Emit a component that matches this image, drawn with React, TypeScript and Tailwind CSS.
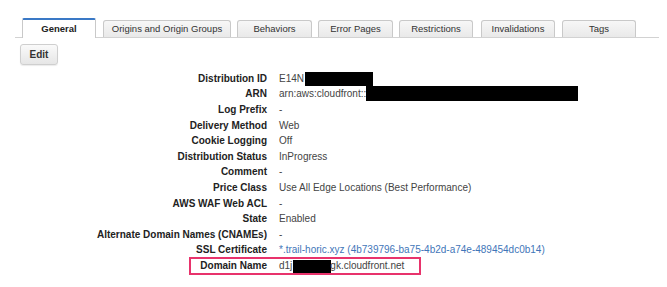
import React from "react";

const tabs: { label: string; w: number; ml: number; active?: boolean }[] = [
  { label: "General", w: 74, ml: 7, active: true },
  { label: "Origins and Origin Groups", w: 128, ml: 7 },
  { label: "Behaviors", w: 75, ml: 6 },
  { label: "Error Pages", w: 75, ml: 6 },
  { label: "Restrictions", w: 74, ml: 6 },
  { label: "Invalidations", w: 74, ml: 8 },
  { label: "Tags", w: 74, ml: 7 },
];

const Redact = ({ w, h }: { w: number; h: number }) => (
  <span className="inline-block bg-black align-middle" style={{ width: w, height: h }} />
);

export default function App() {
  const rows: { label: string; value: React.ReactNode }[] = [
    {
      label: "Distribution ID",
      value: (
        <span className="flex items-center">
          E14N<span className="ml-[1px]"><Redact w={68} h={14} /></span>
        </span>
      ),
    },
    {
      label: "ARN",
      value: (
        <span className="flex items-center">
          arn:aws:cloudfront::<Redact w={212} h={15} />
        </span>
      ),
    },
    { label: "Log Prefix", value: "-" },
    { label: "Delivery Method", value: "Web" },
    { label: "Cookie Logging", value: "Off" },
    { label: "Distribution Status", value: "InProgress" },
    { label: "Comment", value: "-" },
    { label: "Price Class", value: "Use All Edge Locations (Best Performance)" },
    { label: "AWS WAF Web ACL", value: "-" },
    { label: "State", value: "Enabled" },
    { label: "Alternate Domain Names (CNAMEs)", value: "-" },
    {
      label: "SSL Certificate",
      value: (
        <span className="text-[#3f76b9]">
          *.trail-horic.xyz (4b739796-ba75-4b2d-a74e-489454dc0b14)
        </span>
      ),
    },
  ];

  return (
    <div
      className="w-[667px] h-[287px] bg-white overflow-hidden text-[#333]"
      style={{ fontFamily: '"Liberation Sans", Arial, sans-serif' }}
    >
      <div className="pt-[19px] pl-[15px] pr-[8px]">
        <div className="flex items-end h-[19px] border-b border-[#d2d2d2]">
          {tabs.map((t) =>
            t.active ? (
              <div
                key={t.label}
                className="h-[20px] -mb-px flex items-center justify-center bg-white border-x border-t-2 border-[#c9c9c9] border-t-[#3a79c6] rounded-t-[2px] text-[9.5px] font-bold text-[#222]"
                style={{ width: t.w, marginLeft: t.ml }}
              >
                {t.label}
              </div>
            ) : (
              <div
                key={t.label}
                className="h-[17px] flex items-center justify-center bg-gradient-to-b from-[#f7f7f7] to-[#e9e9e9] border border-b-0 border-[#c9c9c9] rounded-t-[3px] text-[9.5px] text-[#333]"
                style={{ width: t.w, marginLeft: t.ml }}
              >
                {t.label}
              </div>
            )
          )}
        </div>
      </div>

      <div className="pl-[20px] mt-[6px]">
        <div className="w-[38px] h-[21px] flex items-center justify-center rounded-[3px] border border-[#cfcfcf] bg-gradient-to-b from-[#fafafa] to-[#e6e6e6] text-[10px] font-bold text-[#333] shadow-[0_1px_1px_rgba(0,0,0,0.08)]">
          Edit
        </div>
      </div>

      <div className="mt-[5.5px] text-[10px]">
        {rows.map((r) => (
          <div key={r.label} className="flex items-center h-[15.6px]">
            <div className="w-[267px] text-right font-bold text-[#222] whitespace-nowrap">{r.label}</div>
            <div className="ml-[12px] text-[#444] whitespace-nowrap">{r.value}</div>
          </div>
        ))}
        <div className="relative flex items-center h-[15.6px]">
          <span className="absolute left-[189px] top-[-1px] w-[232px] h-[18px] border-2 border-[#e8336c]" />
          <div className="w-[267px] text-right font-bold text-[#222] whitespace-nowrap">Domain Name</div>
          <div className="ml-[12px] text-[#444] whitespace-nowrap flex items-center">
            d1j
            <span className="ml-[1px] mr-[-1px]"><Redact w={38} h={13} /></span>
            gk.cloudfront.net
          </div>
        </div>
      </div>
    </div>
  );
}
